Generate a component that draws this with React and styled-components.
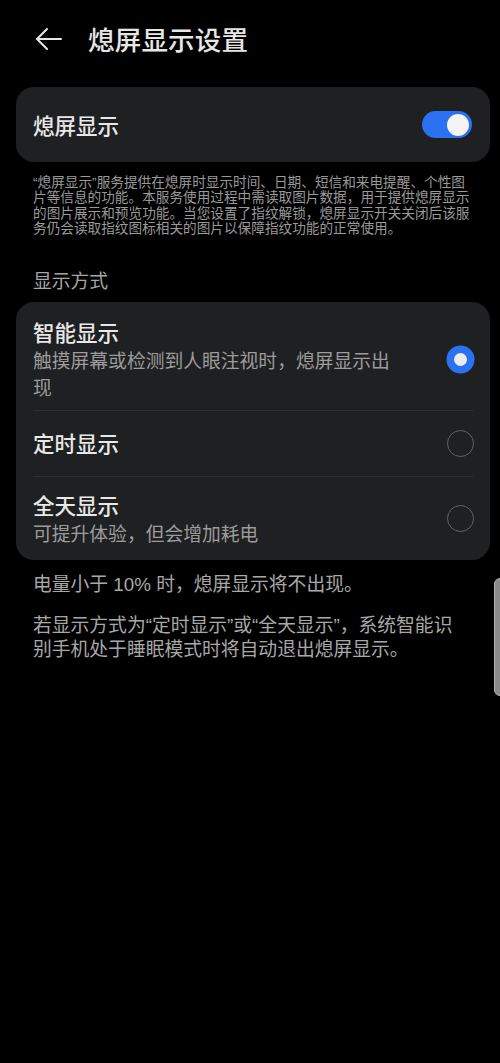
import React, { useState } from 'react';
import styled, { createGlobalStyle } from 'styled-components';

const GlobalStyle = createGlobalStyle`
	html, body {
		margin: 0;
		padding: 0;
		background: #000;
	}
	* {
		box-sizing: border-box;
	}
`

const Screen = styled.div`
	position: relative;
	width: 500px;
	min-height: 1063px;
	background: #000;
	color: #e8e8e8;
	font-family: "Noto Sans CJK SC", "Noto Sans", sans-serif;
	overflow: hidden;
`

const Header = styled.header`
	display: flex;
	align-items: center;
	gap: 26px;
	height: 87px;
	padding: 0 0 10px 35px;
`

const BackButton = styled.button`
	display: flex;
	align-items: center;
	justify-content: center;
	padding: 0;
	border: none;
	background: none;
	color: #e6e6e6;
	cursor: pointer;
	svg {
		width: 27px;
		height: 24px;
	}
`

const Title = styled.h1`
	margin: 0;
	font-size: 26.5px;
	font-weight: 500;
	letter-spacing: 0.2px;
	color: #e6e6e6;
`

const Card = styled.section`
	margin: 0 10px 0 16px;
	background: #1f2022;
	border-radius: 18px;
	overflow: hidden;
`

const SwitchRow = styled.div`
	display: flex;
	align-items: center;
	justify-content: space-between;
	height: 75px;
	padding: 0 18px 0 17px;
`

const RowTitle = styled.div`
	font-size: 21.5px;
	line-height: 28px;
	font-weight: 500;
	color: #e8e8e8;
`

const RowSub = styled.div`
	font-size: 18.8px;
	line-height: 27px;
	color: #9c9c9c;
`

const Toggle = styled.button`
	display: flex;
	align-items: center;
	justify-content: ${props => props.$on ? 'flex-end' : 'flex-start'};
	width: 50px;
	height: 27px;
	padding: 0 3px;
	border: none;
	border-radius: 14px;
	background: ${props => props.$on ? '#2a72f2' : '#555'};
	cursor: pointer;
	&::after {
		content: "";
		width: 22px;
		height: 22px;
		border-radius: 50%;
		background: #f4f4f4;
	}
`

// latin font first so the quotes and digits stay narrow, CJK falls through
const Note = styled.p`
	margin: 13px 26px 0 33px;
	font-family: "Liberation Sans", "Noto Sans CJK SC", sans-serif;
	font-size: 13.65px;
	line-height: 15.3px;
	color: #9a9a9a;
`

const SectionLabel = styled.h2`
	margin: 32px 0 0 33px;
	font-size: 18.8px;
	line-height: 24px;
	font-weight: 400;
	color: #a6a6a6;
`

const OptionCard = styled(Card)`
	margin-top: 10px;
`

const OptionRow = styled.label`
	display: flex;
	align-items: center;
	justify-content: space-between;
	gap: 16px;
	min-height: ${props => props.$min || 65}px;
	padding: ${props => props.$first ? '16px 16px 10px 17px' : '12px 16px 13px 17px'};
	cursor: pointer;
`

const OptionText = styled.div`
	flex: 0 1 372px;
`

const Divider = styled.div`
	height: 1px;
	margin: 0 17px;
	background: #2e2f32;
`

const Radio = styled.span`
	flex: none;
	width: 27px;
	height: 27px;
	border-radius: 50%;
	border: ${props => props.$checked ? '7px solid #2a72f2' : '1.5px solid #626366'};
	background: ${props => props.$checked ? '#ececec' : 'transparent'};
	${props => props.$checked && 'box-shadow: 0 0 0 0.5px #2a72f2;'}
`

const Footer = styled.div`
	display: flex;
	flex-direction: column;
	gap: 17px;
	margin: 13px 30px 0 33px;
`

const FooterText = styled.p`
	margin: 0;
	font-family: "Liberation Sans", "Noto Sans CJK SC", sans-serif;
	font-size: 18.8px;
	line-height: 24px;
	color: #a8a8a8;
`

const SideHandle = styled.div`
	position: absolute;
	right: -6px;
	top: 578px;
	width: 12px;
	height: 118px;
	border-radius: 6px;
	background: #8a8a8a;
	border: 1px solid #b0b0b0;
`

const modes = [
	{ id: 'smart', title: '智能显示', sub: '触摸屏幕或检测到人眼注视时，熄屏显示出现' },
	{ id: 'timed', title: '定时显示' },
	{ id: 'always', title: '全天显示', sub: '可提升体验，但会增加耗电', min: 83 },
]

const App = () => {
	const [enabled, setEnabled] = useState(true)
	const [mode, setMode] = useState('smart')
	return (
		<>
			<GlobalStyle />
			<Screen>
				<Header>
					<BackButton aria-label="返回">
						<svg viewBox="0 0 27 24" fill="none" stroke="currentColor" strokeWidth="2" strokeLinecap="round" strokeLinejoin="round">
							<path d="M26 12H2" />
							<path d="M12 2L2 12l10 10" />
						</svg>
					</BackButton>
					<Title>熄屏显示设置</Title>
				</Header>

				<Card>
					<SwitchRow>
						<RowTitle>熄屏显示</RowTitle>
						<Toggle $on={enabled} onClick={() => setEnabled(!enabled)} aria-label="熄屏显示开关" />
					</SwitchRow>
				</Card>

				<Note>“熄屏显示”服务提供在熄屏时显示时间、日期、短信和来电提醒、个性图片等信息的功能。本服务使用过程中需读取图片数据，用于提供熄屏显示的图片展示和预览功能。当您设置了指纹解锁，熄屏显示开关关闭后该服务仍会读取指纹图标相关的图片以保障指纹功能的正常使用。</Note>

				<SectionLabel>显示方式</SectionLabel>

				<OptionCard>
					{modes.map((m, i) => (
						<React.Fragment key={m.id}>
							{i > 0 && <Divider />}
							<OptionRow $min={m.min} $first={i === 0} onClick={() => setMode(m.id)}>
								<OptionText>
									<RowTitle>{m.title}</RowTitle>
									{m.sub && <RowSub>{m.sub}</RowSub>}
								</OptionText>
								<Radio $checked={mode === m.id} />
							</OptionRow>
						</React.Fragment>
					))}
				</OptionCard>

				<Footer>
					<FooterText>电量小于 10% 时，熄屏显示将不出现。</FooterText>
					<FooterText>若显示方式为“定时显示”或“全天显示”，系统智能识别手机处于睡眠模式时将自动退出熄屏显示。</FooterText>
				</Footer>

				<SideHandle />
			</Screen>
		</>
	)
}

export default App;
